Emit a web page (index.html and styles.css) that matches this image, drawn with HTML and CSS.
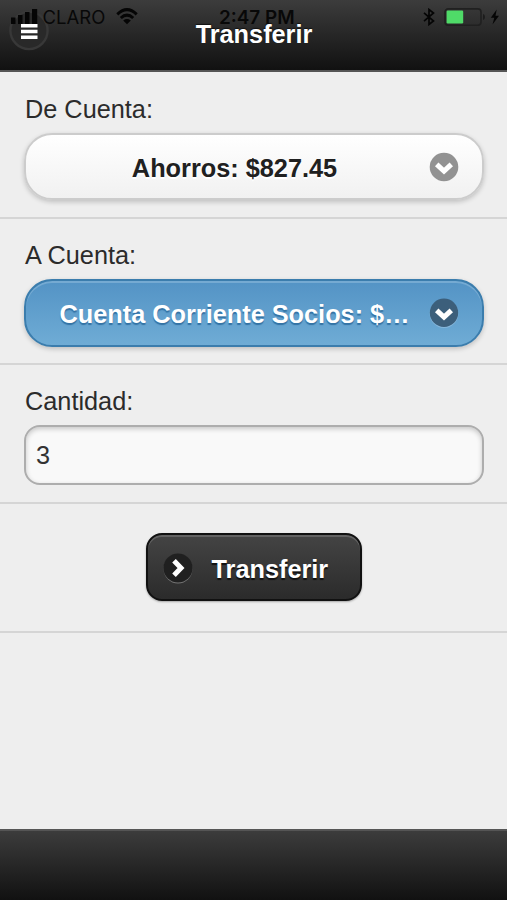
FILE: index.html
```
<!DOCTYPE html>
<html lang="es">
<head>
<meta charset="utf-8">
<title>Transferir</title>
<link rel="stylesheet" href="styles.css">
</head>
<body>
<div class="page">
  <header class="header">
    <button class="menu" aria-label="Menu">
      <svg width="40" height="40" viewBox="0 0 40 40"><circle cx="20" cy="19.500" r="18.600" fill="#292929" stroke="#383838" stroke-width="2.400"/><path d="M12 14.800h16.500M12 20.500h16.500M12 26.200h16.500" stroke="#fff" stroke-width="3.400"/></svg>
    </button>
    <h1 class="title">Transferir</h1>
    <div class="status">
      <svg class="signal" width="28" height="17" viewBox="0 0 28 17"><path d="M0 9.500h4.500v6.500H0zM7 7h4.500v9H7zM14 4h4.500v12H14zM21 1h5.200v15H21z"/></svg>
      <span class="carrier">CLARO</span>
      <svg class="wifi" width="22" height="17" viewBox="0 0 22 17"><path d="M1.300 6.300Q11-3 20.700 6.300M4.800 10Q11 4.200 17.200 10" fill="none" stroke="#050505" stroke-width="3"/><path d="M11 16.300l-3.800-3.900Q11 9.500 14.800 12.400z"/></svg>
      <span class="clock">2:47 PM</span>
      <svg class="bluetooth" width="12" height="18" viewBox="0 0 12 18"><path d="M1 4.800l9.500 8.200L6 16.500v-15L10.500 5 1 13.200" fill="none" stroke="#050505" stroke-width="1.700"/></svg>
      <svg class="battery" width="42" height="18" viewBox="0 0 42 18"><rect x="1" y=".9" width="36" height="16.400" rx="3.200" fill="none" stroke="#202020" stroke-width="1.600"/><rect x="2.600" y="2.500" width="16.600" height="13" rx="1.200" fill="#4fdb68"/><path d="M39 6q2 .6 2 3t-2 3z" fill="#1c1c1c"/></svg>
      <svg class="bolt" width="10" height="16" viewBox="0 0 10 16"><path d="M6.700.5L.8 8.800h3.500L2.500 15.500 9 6.800H5.500z"/></svg>
    </div>
  </header>
  <main class="content">
    <section class="field">
      <label class="label">De Cuenta:</label>
      <button class="select light"><span class="value">Ahorros: $827.45</span>
        <svg class="arrow" width="30" height="30" viewBox="0 0 30 30"><circle cx="15" cy="15" r="14.300" fill="#929292"/><path d="M7.700 12.300l7.300 6.800 7.300-6.800" fill="none" stroke="#fff" stroke-width="5"/></svg>
      </button>
    </section>
    <section class="field target">
      <label class="label">A Cuenta:</label>
      <button class="select blue"><span class="value">Cuenta Corriente Socios: $…</span>
        <svg class="arrow" width="30" height="30" viewBox="0 0 30 30"><circle cx="15" cy="15.700" r="14.300" fill="#86b7db"/><circle cx="15" cy="14.800" r="14.200" fill="#3c5f7b"/><path d="M7.700 12.300l7.300 6.800 7.300-6.800" fill="none" stroke="#fff" stroke-width="5"/></svg>
      </button>
    </section>
    <section class="field amount">
      <label class="label" for="amount">Cantidad:</label>
      <input class="input" id="amount" value="3">
    </section>
    <section class="actions">
      <button class="submit">
        <svg width="30" height="31" viewBox="0 0 30 31"><circle cx="15" cy="16" r="14.400" fill="#777"/><circle cx="15" cy="15" r="14.600" fill="#202020"/><path d="M11 7.800l7 7.200-7 7.200" fill="none" stroke="#fff" stroke-width="5"/></svg>
        <span class="caption">Transferir</span>
      </button>
    </section>
  </main>
  <footer class="footer"></footer>
</div>
</body>
</html>
```
FILE: styles.css
```
* { box-sizing: border-box; }
body {
  margin: 0;
  color: #2b2b2b;
  font: 25.3px/32px "Liberation Sans", Arial, sans-serif;
}
button, input { margin: 0; font: inherit; }
.page {
  display: flex;
  flex-direction: column;
  height: 900px;
  background: #eee;
  overflow: hidden;
}
.header {
  position: relative;
  height: 72px;
  flex: none;
  border-bottom: 2px solid #555;
  background: linear-gradient(#3c3c3c, #111);
}
.menu {
  position: absolute;
  left: 9px;
  top: 11px;
  padding: 0;
  border: 0;
  background: none;
}
.menu svg { display: block; }
.title {
  margin: 0;
  padding: 18px 0 0 1px;
  color: #fff;
  font-size: 25.3px;
  line-height: 32px;
  text-align: center;
  text-shadow: 0 -1px 1px #111;
}
.status {
  position: absolute;
  inset: 0;
  color: #080808;
  font: 18.5px/22px Inter, sans-serif;
}
.status > * { position: absolute; fill: #050505; }
.signal { left: 10.5px; top: 8px; }
.carrier { left: 42.5px; top: 6px; }
.wifi { left: 116px; top: 8px; }
.clock { left: 219px; top: 7px; font-size: 18.9px; font-weight: 600; white-space: nowrap; }
.bluetooth { left: 423px; top: 8px; }
.battery { left: 444px; top: 8px; }
.bolt { left: 490px; top: 9px; }
.content { flex: 1; }
.field {
  height: 147px;
  padding: 21px 24px 0;
  border-bottom: 2px solid #d5d5d5;
}
.target { height: 146px; }
.label { display: block; height: 40px; padding-left: 1px; }
.select {
  display: flex;
  align-items: center;
  width: 460px;
  height: 67px;
  padding: 0 23px 0 33px;
  border: 2px solid #ccc;
  border-radius: 28px;
  font-weight: bold;
  text-align: center;
}
.value {
  width: 351px;
  padding-top: 2px;
  white-space: nowrap;
  line-height: 36px;
}
.arrow { margin-left: auto; flex: none; }
.light {
  color: #202020;
  background: linear-gradient(#fff, #f1f1f1);
  box-shadow: 0 2px 5px rgba(0, 0, 0, .2);
  text-shadow: 0 2px 0 #fff;
}
.blue {
  height: 68px;
  color: #fff;
  border-color: #3b7dad;
  background: linear-gradient(#5393c5, #6facd5);
  box-shadow: inset 0 2px 0 #75aad2, 0 2px 5px rgba(0, 0, 0, .2);
  text-shadow: 0 2px 1px #3373a5;
}
.target .label { margin-top: -1px; }
.amount { height: 139px; padding-top: 20px; }
.input {
  display: block;
  width: 460px;
  height: 60px;
  padding: 0 10px;
  border: 2px solid #adadad;
  border-radius: 16px;
  outline: 0;
  color: #333;
  background: #f9f9f9;
  box-shadow: inset 0 2px 5px rgba(0, 0, 0, .2);
}
.actions {
  display: flex;
  justify-content: center;
  height: 129px;
  padding-top: 29px;
  border-bottom: 2px solid #d5d5d5;
}
.submit {
  display: flex;
  align-items: center;
  gap: 19px;
  width: 216px;
  height: 68px;
  padding: 2px 0 0 15px;
  border: 2px solid #111;
  border-radius: 16px;
  color: #fff;
  font-weight: bold;
  background: linear-gradient(#444, #2b2b2b);
  box-shadow: inset 0 2px 0 #626262, 0 1px 2px rgba(0, 0, 0, .3);
  text-shadow: 0 2px 1px #111;
}
.caption { padding-top: 2px; }
.footer {
  height: 71px;
  flex: none;
  border-top: 2px solid #555;
  background: linear-gradient(#3c3c3c, #111);
}
```
